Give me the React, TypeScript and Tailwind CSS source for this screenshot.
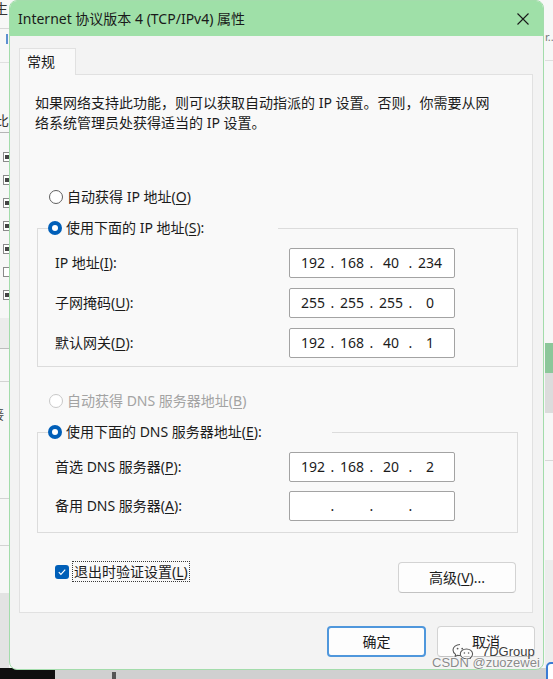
import React from "react";

// Windows 11 style "Internet Protocol Version 4" properties dialog
const ui = "[font-family:'Noto_Sans','Noto_Sans_CJK_SC',sans-serif]";

function Key({ k }: { k: string }) {
  return <u className="underline underline-offset-[2px] decoration-1">{k}</u>;
}

function Radio({
  checked,
  disabled,
  children,
}: {
  checked?: boolean;
  disabled?: boolean;
  children: React.ReactNode;
}) {
  return (
    <span className="flex items-center h-[20px]">
      {checked ? (
        <span className="w-[14px] h-[14px] rounded-full bg-[#005fb8] flex items-center justify-center shrink-0">
          <span className="w-[6px] h-[6px] rounded-full bg-white" />
        </span>
      ) : (
        <span
          className={`w-[14px] h-[14px] rounded-full bg-white border shrink-0 ${
            disabled ? "border-[#c8c8c8]" : "border-[#606060]"
          }`}
        />
      )}
      <span
        className={`ml-[4px] whitespace-nowrap ${
          disabled ? "text-[#a3a3a3]" : "text-[#1b1b1b]"
        }`}
      >
        {children}
      </span>
    </span>
  );
}

function IpField({ parts }: { parts?: string[] }) {
  const p = parts ?? ["", "", "", ""];
  return (
    <div className="w-[166px] h-[30px] bg-white border border-[#a3a3a3] rounded-[2px] flex items-center pl-[8px] text-[14px] leading-[16px] text-[#1b1b1b]">
      {p.map((v, i) => (
        <React.Fragment key={i}>
          <span className="w-[30px] text-center">{v}</span>
          {i < 3 && <span className="w-[9px] text-center">.</span>}
        </React.Fragment>
      ))}
    </div>
  );
}

function FieldRow({
  label,
  parts,
}: {
  label: React.ReactNode;
  parts?: string[];
}) {
  return (
    <div className="grid grid-cols-[234px_166px] items-center">
      <span className="text-[#1b1b1b] whitespace-nowrap">{label}</span>
      <IpField parts={parts} />
    </div>
  );
}

function Button({
  children,
  primary,
  className,
}: {
  children: React.ReactNode;
  primary?: boolean;
  className?: string;
}) {
  return (
    <button
      className={`h-[31px] rounded-[4px] bg-[#fdfdfd] text-[14px] text-[#1b1b1b] flex items-center justify-center ${
        primary
          ? "border-2 border-[#4f97dc]"
          : "border border-[#d3d3d3] border-b-[#c2c2c2]"
      } ${className ?? ""}`}
    >
      {children}
    </button>
  );
}

function WeChatMark() {
  return (
    <svg width="22" height="16" viewBox="0 0 22 16" fill="none">
      <g stroke="#ffffff" strokeWidth="2.6" strokeLinejoin="round">
        <path d="M8 1.5c-3.9 0-7 2.5-7 5.6 0 1.8 1 3.3 2.6 4.3L3 13.6l2.7-1.4c.7.2 1.5.3 2.3.3" />
        <path d="M14.5 6c-3.4 0-6.2 2.2-6.2 4.9s2.8 4.9 6.2 4.9c.7 0 1.3-.1 1.9-.2l2.2 1.1-.5-1.8c1.5-.9 2.5-2.3 2.5-4 0-2.7-2.8-4.9-6.1-4.9z" />
      </g>
      <g stroke="#5a5a5a" strokeWidth="1.1" strokeLinejoin="round">
        <path d="M8 1.5c-3.9 0-7 2.5-7 5.6 0 1.8 1 3.3 2.6 4.3L3 13.6l2.7-1.4c.7.2 1.5.3 2.3.3" />
        <path d="M14.5 6c-3.4 0-6.2 2.2-6.2 4.9s2.8 4.9 6.2 4.9c.7 0 1.3-.1 1.9-.2l2.2 1.1-.5-1.8c1.5-.9 2.5-2.3 2.5-4 0-2.7-2.8-4.9-6.1-4.9z" />
      </g>
      <circle cx="5.6" cy="5.6" r="0.9" fill="#5a5a5a" />
      <circle cx="10.2" cy="5.6" r="0.9" fill="#5a5a5a" />
      <circle cx="12.4" cy="10" r="0.8" fill="#5a5a5a" />
      <circle cx="16.6" cy="10" r="0.8" fill="#5a5a5a" />
    </svg>
  );
}

// window that sits behind the dialog
function Backdrop() {
  const boxes = [157, 180, 203, 226, 249, 272, 295];
  return (
    <div className="absolute inset-0 bg-[#f7f7f7]">
      <span className="absolute left-[-6px] top-[-1px] text-[14px] leading-[20px] text-[#333]">生</span>
      <div className="absolute left-0 top-[28px] w-[9px] h-px bg-[#d6d6d6]" />
      <div className="absolute left-[6px] top-[34px] w-[2px] h-[10px] bg-[#5d8fd0]" />
      <div className="absolute left-0 top-[62px] w-[9px] h-px bg-[#e0e0e0]" />
      <span className="absolute left-[-5px] top-[111px] text-[14px] leading-[20px] text-[#333]">比</span>
      <div className="absolute left-0 top-[132px] w-[9px] h-px bg-[#b5b5b5]" />
      {boxes.map((y, i) => (
        <div
          key={y}
          className="absolute left-[3px] w-[8px] h-[10px] border border-[#8a8a8a] bg-white flex items-center justify-center"
          style={{ top: y - 5 }}
        >
          {i !== 5 && <div className="w-[4px] h-[4px] bg-[#444]" />}
        </div>
      ))}
      <div className="absolute left-0 top-[318px] w-[9px] h-[30px] bg-[#ececec]" />
      <div className="absolute left-0 top-[348px] w-[9px] h-px bg-[#bdbdbd]" />
      <div className="absolute left-0 top-[381px] w-[9px] h-px bg-[#d3d3d3]" />
      <span className="absolute left-[-9px] top-[404px] text-[13px] leading-[20px] text-[#444]">接</span>
      <div className="absolute left-0 top-[498px] w-[9px] h-px bg-[#d3d3d3]" />
      <div className="absolute left-0 top-[545px] w-[9px] h-px bg-[#d3d3d3]" />
      <div className="absolute left-0 top-[593px] w-[9px] h-[80px] bg-[#e3e3e3]" />

      <span className="absolute left-[545px] top-[30px] text-[11px] leading-[14px] text-[#777]">r...</span>
      <div className="absolute left-[545px] top-[60px] w-[8px] h-px bg-[#dedede]" />
      <div className="absolute left-[545px] top-[343px] w-[8px] h-[30px] bg-[#8cc79a]" />
      <div className="absolute left-[545px] top-[373px] w-[8px] h-[40px] bg-[#dcdcdc]" />
      <div className="absolute left-[545px] top-[460px] w-[8px] h-px bg-[#d8d8d8]" />
      <div className="absolute left-[545px] top-[560px] w-[8px] h-[110px] bg-[#ededed]" />

      <div className="absolute left-0 top-[668px] w-[553px] h-[11px] bg-[#d0d0d0]" />
      <div className="absolute left-0 top-[668px] w-[55px] h-[11px] bg-[#0f0f0f]" />
      <div className="absolute left-[112px] top-[672px] w-[4px] h-[7px] bg-[#555]" />
      <div className="absolute left-[546px] top-[662px] w-[20px] h-[30px] rounded-[5px] border-2 border-[#3a7bd5] bg-white" />
    </div>
  );
}

export default function App() {
  return (
    <div className={`relative w-[553px] h-[679px] overflow-hidden text-[14px] leading-[20px] ${ui}`}>
      <Backdrop />

      <div className="relative z-10 ml-[9px] w-[535px] h-[670px] flex flex-col rounded-[8px] border border-[#a3dcab] bg-[#f3f3f3] overflow-hidden">
        {/* title bar */}
        <div className="h-[35px] bg-[#9fe0a8] flex items-center justify-between shrink-0">
          <span className="pl-[8px] text-[14px] text-[#1a1a1a] whitespace-nowrap">
            Internet 协议版本 4 (TCP/IPv4) 属性
          </span>
          <span className="w-[40px] h-full flex items-center justify-center">
            <svg width="12" height="12" viewBox="0 0 12 12">
              <path d="M.5.5l11 11M11.5.5l-11 11" stroke="#1a1a1a" strokeWidth="1.1" />
            </svg>
          </span>
        </div>

        {/* tab */}
        <div className="pt-[12px] pl-[9px]">
          <div className="relative z-10 w-[57px] h-[27px] -mb-px bg-[#f9f9f9] border border-b-0 border-[#e1e1e1] pl-[7px] flex items-center text-[#1b1b1b]">
            常规
          </div>
        </div>

        {/* tab page */}
        <div className="ml-[9px] w-[514px] h-[539px] bg-[#f9f9f9] border border-[#e1e1e1] flex flex-col">
          <p className="pt-[18px] pl-[15px] text-[#1b1b1b] whitespace-nowrap">
            如果网络支持此功能，则可以获取自动指派的 IP 设置。否则，你需要从网
            <br />
            络系统管理员处获得适当的 IP 设置。
          </p>

          <div className="mt-[54px] pl-[29px]">
            <Radio>
              自动获得 IP 地址(<Key k="O" />)
            </Radio>
          </div>

          <fieldset className="mt-[11px] ml-[17px] w-[481px] border border-[#dcdcdc]">
            <legend className="ml-[10px] w-[230px] h-[20px] bg-[#f9f9f9]">
              <Radio checked>
                使用下面的 IP 地址(<Key k="S" />):
              </Radio>
            </legend>
            <div className="pt-[10px] pb-[8px] pl-[17px] flex flex-col gap-[10px]">
              <FieldRow
                label={<>IP 地址(<Key k="I" />):</>}
                parts={["192", "168", "40", "234"]}
              />
              <FieldRow
                label={<>子网掩码(<Key k="U" />):</>}
                parts={["255", "255", "255", "0"]}
              />
              <FieldRow
                label={<>默认网关(<Key k="D" />):</>}
                parts={["192", "168", "40", "1"]}
              />
            </div>
          </fieldset>

          <div className="mt-[24px] pl-[29px]">
            <Radio disabled>
              自动获得 DNS 服务器地址(<Key k="B" />)
            </Radio>
          </div>

          <fieldset className="mt-[11px] ml-[17px] w-[481px] border border-[#dcdcdc]">
            <legend className="ml-[10px] w-[284px] h-[20px] bg-[#f9f9f9]">
              <Radio checked>
                使用下面的 DNS 服务器地址(<Key k="E" />):
              </Radio>
            </legend>
            <div className="pt-[10px] pb-[11px] pl-[17px] flex flex-col gap-[9px]">
              <FieldRow
                label={<>首选 DNS 服务器(<Key k="P" />):</>}
                parts={["192", "168", "20", "2"]}
              />
              <FieldRow label={<>备用 DNS 服务器(<Key k="A" />):</>} />
            </div>
          </fieldset>

          <div className="mt-[28px] pl-[35px] pr-[16px] flex items-start justify-between">
            <div className="flex items-center h-[21px]">
              <span className="w-[14px] h-[14px] rounded-[3px] bg-[#005fb8] flex items-center justify-center">
                <svg width="10" height="10" viewBox="0 0 10 10">
                  <path d="M1.8 5.2l2.1 2.1 4.3-4.6" fill="none" stroke="#fff" strokeWidth="1.2" />
                </svg>
              </span>
              <span className="ml-[3px] h-[21px] px-[1px] border border-dotted border-[#3a3a3a] flex items-center text-[#1b1b1b] whitespace-nowrap">
                退出时验证设置(<Key k="L" />)
              </span>
            </div>
            <Button className="mt-[1px] w-[118px]">
              高级(<Key k="V" />)...
            </Button>
          </div>
        </div>

        {/* dialog buttons */}
        <div className="mt-[13px] pr-[8px] flex justify-end gap-[11px]">
          <Button primary className="w-[99px]">确定</Button>
          <Button className="w-[98px]">取消</Button>
        </div>
      </div>

      {/* watermark */}
      <div className="absolute z-20 left-[452px] top-[643px]">
        <WeChatMark />
      </div>
      <span className="absolute z-20 left-[482px] top-[644px] text-[13px] leading-[16px] text-[#3d3d3d] [font-family:'Liberation_Sans',Arial,sans-serif] [text-shadow:0_0_2px_#fff,0_0_1px_#fff]">
        7DGroup
      </span>
      <span className="absolute z-20 left-[432px] top-[655px] text-[13px] leading-[16px] text-[#8a8a8a] [font-family:'Liberation_Sans',Arial,sans-serif] [text-shadow:0_0_2px_#fff,0_0_1px_#fff]">
        CSDN @zuozewei
      </span>
    </div>
  );
}
